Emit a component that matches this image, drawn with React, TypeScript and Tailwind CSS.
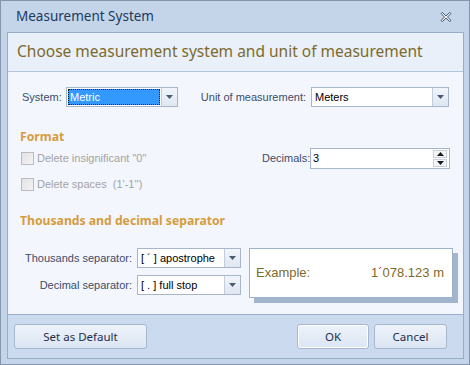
import { useState } from "react";

const ui = "font-['Noto_Sans',sans-serif]";
const body = "font-['Liberation_Sans',Arial,sans-serif]";

function Arrow() {
  return (
    <svg width="7" height="4" viewBox="0 0 7 4" className="block">
      <path d="M0 0h7L3.5 4z" fill="#4a5a74" />
    </svg>
  );
}

function Combo({
  value,
  width,
  selected = false,
}: {
  value: string;
  width: string;
  selected?: boolean;
}) {
  return (
    <div className={`flex h-[20px] shrink-0 ${width} border border-[#a7b6cb] bg-white`}>
      <div className="flex min-w-0 flex-1 items-center p-[1px]">
        {selected ? (
          <div className="flex h-full w-full items-center border border-dotted border-[#1a1a1a] bg-[#3399ff] pl-[1px] text-[11px] text-white">
            {value}
          </div>
        ) : (
          <span className="pl-[2px] text-[11px] whitespace-nowrap text-black">{value}</span>
        )}
      </div>
      <div className="flex w-[16px] shrink-0 items-center justify-center border-l border-[#c2cedd] bg-gradient-to-b from-[#f1f5fb] to-[#dfe7f2]">
        <Arrow />
      </div>
    </div>
  );
}

function Check({ label }: { label: string }) {
  return (
    <label className="flex items-center gap-[3px] text-[11px] whitespace-pre text-[#a3a3a3]">
      <span className="block size-[13px] border border-[#b9bcc2] bg-gradient-to-br from-[#e2e2e2] to-[#f4f4f4]" />
      {label}
    </label>
  );
}

function Btn({ children, focus = false, w }: { children: string; focus?: boolean; w: string }) {
  return (
    <button
      className={`flex h-[25px] ${w} items-center justify-center rounded-[3px] border border-[#a7b8cf] bg-gradient-to-b from-[#eef3fa] to-[#dbe5f3] text-[11.5px] text-[#1e2f4d] ${
        focus ? "shadow-[inset_0_0_0_1px_#ffffff]" : ""
      }`}
    >
      {children}
    </button>
  );
}

export default function App() {
  const [decimals] = useState("3");

  return (
    <div className={`flex h-[365px] w-[470px] flex-col border border-[#8595ab] bg-[#c4d5ea] ${ui}`}>
      {/* title bar */}
      <div className="flex h-[31px] items-center justify-between pr-[17px] pl-[15px]">
        <span className="text-[13.5px] text-[#1e395b]">Measurement System</span>
        <svg width="12" height="10" viewBox="0 0 12 10">
          <path
            d="M1 1.5L4.5 5 1 8.5 2.5 9.5 6 6 9.5 9.5 11 8.5 7.5 5 11 1.5 9.5 0.5 6 4 2.5 0.5z"
            fill="#f4f7fb"
            stroke="#4b5870"
            strokeWidth="1"
            strokeLinejoin="round"
          />
        </svg>
      </div>

      {/* panel */}
      <div className="mr-[5px] mb-[5px] ml-[6px] flex flex-1 flex-col border border-[#9aadc6]">
        <div className="flex h-[39px] items-center border-b border-[#b4c4da] bg-[#e9f0f9] pl-[9px]">
          <span className="text-[15.5px] text-[#7d6a2c]">
            Choose measurement system and unit of measurement
          </span>
        </div>

        <div className={`flex flex-1 flex-col bg-[#f4f6fd] pl-[12px] text-[11px] text-[#3b4d6b] ${body}`}>
          {/* system / unit row */}
          <div className="mt-[15px] flex h-[20px] items-center whitespace-nowrap">
            <span className="w-[46px] shrink-0 pl-[2px]">System:</span>
            <Combo value="Metric" width="w-[112px]" selected />
            <span className="w-[133px] shrink-0 pr-[5px] text-right">Unit of measurement:</span>
            <Combo value="Meters" width="w-[138px]" />
          </div>

          <div className={`mt-[22px] h-[16px] text-[12.2px] leading-[16px] font-bold text-[#d69c3e] ${ui}`}>
            Format
          </div>

          <div className="mt-[3px] flex h-[21px] items-center whitespace-nowrap">
            <div className="w-[242px] shrink-0 pl-[1px]">
              <Check label={'Delete insignificant "0"'} />
            </div>
            <span className="w-[48px] shrink-0 pr-[4px] text-right">Decimals:</span>
            <div className="flex h-[21px] w-[140px] shrink-0 items-center border border-[#a7b6cb] bg-white pr-[2px]">
              <span className="flex-1 pl-[2px] text-black">{decimals}</span>
              <div className="flex flex-col gap-[1px]">
                <div className="flex h-[8px] w-[14px] items-center justify-center border border-[#c9d2de] bg-[#f1f4f9]">
                  <svg width="7" height="4" viewBox="0 0 7 4">
                    <path d="M0 4h7L3.5 0z" fill="#1a1a1a" />
                  </svg>
                </div>
                <div className="flex h-[8px] w-[14px] items-center justify-center border border-[#c9d2de] bg-[#f1f4f9]">
                  <svg width="7" height="4" viewBox="0 0 7 4">
                    <path d="M0 0h7L3.5 4z" fill="#1a1a1a" />
                  </svg>
                </div>
              </div>
            </div>
          </div>

          <div className="mt-[5px] flex h-[20px] items-center pl-[1px]">
            <Check label="Delete spaces  (1'-1'')" />
          </div>

          <div className={`mt-[19px] h-[16px] text-[12.2px] leading-[16px] font-bold text-[#d69c3e] ${ui}`}>
            Thousands and decimal separator
          </div>

          <div className="mt-[19px] flex items-start whitespace-nowrap">
            <div className="flex shrink-0 flex-col gap-[7px]">
              <div className="flex h-[20px] items-center">
                <span className="w-[117px] shrink-0 pr-[5px] text-right">Thousands separator:</span>
                <Combo value="[ ´ ] apostrophe" width="w-[104px]" />
              </div>
              <div className="flex h-[20px] items-center">
                <span className="w-[117px] shrink-0 pr-[5px] text-right">Decimal separator:</span>
                <Combo value="[ . ] full stop" width="w-[104px]" />
              </div>
            </div>
            <div className="ml-[8px] flex h-[50px] w-[204px] shrink-0 items-center justify-between border border-[#9fb2cb] bg-white pr-[8px] pl-[6px] text-[13px] text-[#7d6a2c] shadow-[5px_5px_0_#a3b5cc]">
              <span>Example:</span>
              <span>
                1<span className="text-[#e02020]">´</span>078<span className="text-[#e02020]">.</span>123 m
              </span>
            </div>
          </div>
        </div>

        <div className="flex h-[44px] items-center border-t border-[#9aadc6] bg-[#ccdaf0] pr-[16px] pl-[6px]">
          <Btn w="w-[133px]">Set as Default</Btn>
          <div className="flex-1" />
          <Btn w="w-[72px]" focus>
            OK
          </Btn>
          <div className="w-[5px]" />
          <Btn w="w-[73px]">Cancel</Btn>
        </div>
      </div>
    </div>
  );
}
